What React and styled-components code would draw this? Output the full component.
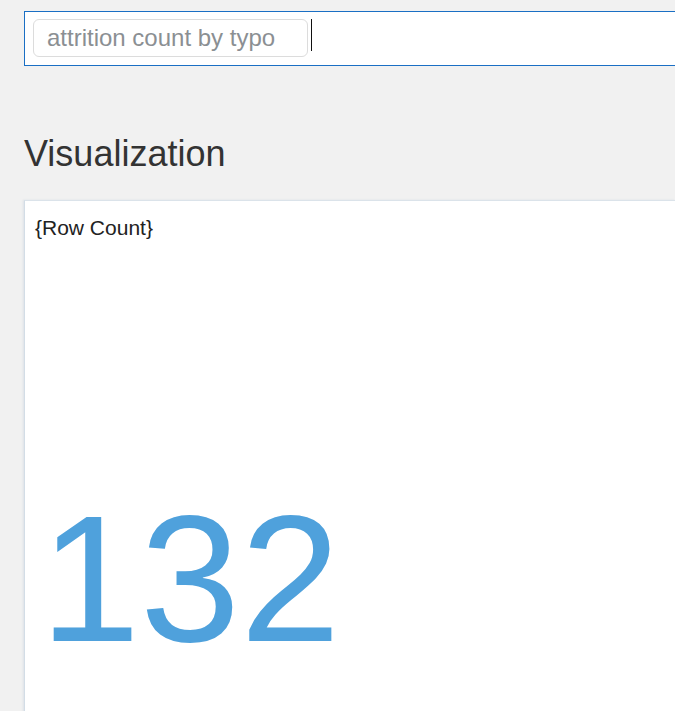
import React from 'react'
import styled, { createGlobalStyle } from 'styled-components'

const GlobalStyle = createGlobalStyle`
  html, body {
    margin: 0;
    padding: 0;
    background: #f1f1f1;
    overflow: hidden;
  }
  body {
    font-family: "Liberation Sans", Arial, sans-serif;
  }
`

const Page = styled.div`
  padding-left: 24px;
  width: 651px;
  height: 711px;
  overflow: hidden;
`

const QueryBar = styled.div`
  margin-top: 11px;
  height: 55px;
  box-sizing: border-box;
  border: 1px solid #1a6fc4;
  border-right: none;
  background: #fff;
  display: flex;
  align-items: flex-start;
  padding: 7px 0 0 8px;
`

const Chip = styled.div`
  width: 275px;
  height: 38px;
  box-sizing: border-box;
  border: 1px solid #dcdcdc;
  border-radius: 6px;
  padding-left: 13px;
  display: flex;
  align-items: center;
  font-size: 24px;
  color: #8b8f93;
  white-space: nowrap;
`

const Caret = styled.div`
  width: 1px;
  height: 32px;
  margin-left: 3px;
  background: #111;
`

const Heading = styled.h2`
  margin: 70px 0 0;
  font-size: 36px;
  line-height: 36px;
  font-weight: normal;
  color: #333;
`

const Card = styled.div`
  margin-top: 28px;
  background: #fff;
  border-top: 1px solid #dbe3ea;
  border-left: 1px solid #d3dde6;
  box-shadow: -1px 0 2px rgba(160, 180, 200, 0.25);
  height: 600px;
  padding: 16px 0 0 10px;
`

const Label = styled.div`
  font-size: 21px;
  line-height: 21px;
  color: #222;
`

const Metric = styled.div`
  margin: 251px 0 0 5px;
  font-size: 180px;
  line-height: 180px;
  color: #4fa1dc;
`

export default function App() {
  return (
    <>
      <GlobalStyle />
      <Page>
        <QueryBar>
          <Chip>attrition count by typo</Chip>
          <Caret />
        </QueryBar>
        <Heading>Visualization</Heading>
        <Card>
          <Label>{'{Row Count}'}</Label>
          <Metric>132</Metric>
        </Card>
      </Page>
    </>
  )
}
